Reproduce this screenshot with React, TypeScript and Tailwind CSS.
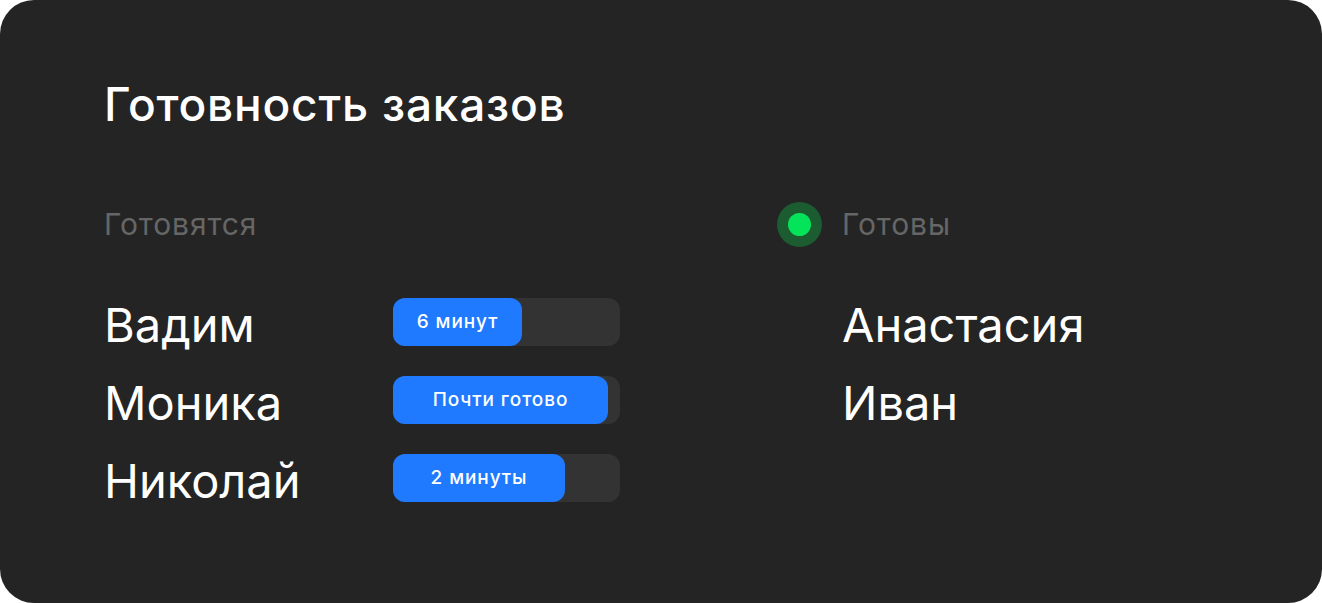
import React from 'react'

const cooking = [
  { id: 1, name: 'Вадим', label: '6 минут', fill: 129 },
  { id: 2, name: 'Моника', label: 'Почти готово', fill: 215 },
  { id: 3, name: 'Николай', label: '2 минуты', fill: 172 },
]

const ready = [
  { id: 1, name: 'Анастасия' },
  { id: 2, name: 'Иван' },
]

function App() {
  return (
    <div className="w-[1322px] h-[603px] bg-white font-['Inter','Noto_Sans',sans-serif]">
      <div className="w-full h-full rounded-[34px] bg-[#242424] pl-[104px] pt-[76px] text-white">
        {/* Title */}
        <h1 className="text-[46px] leading-[56px] font-medium tracking-[0.8px]">
          Готовность заказов
        </h1>

        <div className="flex mt-[70px]">
          {/* Orders still cooking */}
          <div className="w-[673px]">
            <div className="h-[45px] flex items-center text-[30px] tracking-[0.9px] text-[#666666]">
              Готовятся
            </div>
            <div className="flex flex-col gap-[30px] mt-[51px]">
              {cooking.map((order) => (
                <div key={order.id} className="flex items-center h-[48px]">
                  <div className="w-[289px] text-[47px] leading-[48px] pt-[6px]">
                    {order.name}
                  </div>
                  <div className="w-[227px] h-[48px] rounded-[12px] bg-[#333333] flex">
                    <div
                      className="h-full rounded-[12px] bg-[#1f7aff] flex items-center justify-center text-[19px] tracking-[0.9px] font-medium"
                      style={{ width: order.fill }}
                    >
                      {order.label}
                    </div>
                  </div>
                </div>
              ))}
            </div>
          </div>

          {/* Ready orders */}
          <div>
            <div className="h-[45px] flex items-center gap-[20px]">
              <div className="w-[45px] h-[45px] rounded-full bg-[#1b5c31] flex items-center justify-center">
                <div className="w-[23px] h-[23px] rounded-full bg-[#05e35a]" />
              </div>
              <span className="text-[30px] tracking-[0.9px] text-[#666666]">Готовы</span>
            </div>
            <div className="flex flex-col gap-[30px] mt-[51px] pl-[65px]">
              {ready.map((order) => (
                <div key={order.id} className="h-[48px] flex items-center">
                  <div className="text-[47px] leading-[48px] pt-[6px]">{order.name}</div>
                </div>
              ))}
            </div>
          </div>
        </div>
      </div>
    </div>
  )
}

export default App
